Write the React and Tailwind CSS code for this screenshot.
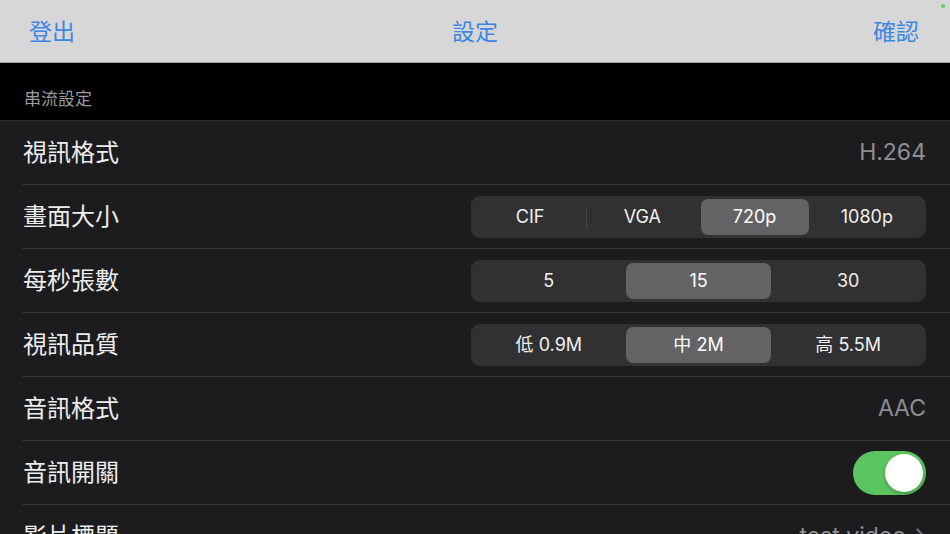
import React from "react";

const font = { fontFamily: "Inter, 'Noto Sans CJK TC', 'Noto Sans CJK SC', sans-serif" };

const Segmented = ({ items, selected }) => (
  <div className="flex h-[42px] w-[455px] items-stretch rounded-[9px] bg-[#313134] p-[3px]">
    {items.map((item, i) => {
      const active = i === selected;
      const showDivider = i > 0 && i !== selected && i - 1 !== selected;
      return (
        <div key={item} className="relative flex flex-1 items-center justify-center">
          {showDivider && <div className="absolute left-0 top-[9px] h-[20px] w-px bg-[#48484b]" />}
          <div
            className={
              active
                ? "mx-[2px] flex h-full w-full items-center justify-center rounded-[7px] bg-[#636366] text-[18px] text-white"
                : "flex h-full w-full items-center justify-center text-[18px] text-[#f0f0f0]"
            }
          >
            {item}
          </div>
        </div>
      );
    })}
  </div>
);

const Row = ({ label, children }) => (
  <div className="pl-[22px]">
    <div className="flex h-[64px] items-center justify-between border-b border-[#353537] pr-[24px]">
      <span className="pl-px text-[24px] text-[#ededed]">{label}</span>
      {children}
    </div>
  </div>
);

const Value = ({ children }) => <span className="text-[23px] text-[#8e8e93]">{children}</span>;

const Toggle = () => (
  <div className="flex h-[44px] w-[73px] items-center justify-end rounded-full bg-[#5cc55f] pr-[3px]">
    <div className="h-[38px] w-[38px] rounded-full bg-white shadow-[0_2px_4px_rgba(0,0,0,0.25)]" />
  </div>
);

export default function App() {
  return (
    <div className="relative h-[534px] w-[950px] overflow-hidden bg-[#1c1c1e]" style={font}>
      <div className="absolute right-[5px] top-[4px] h-[4px] w-[4px] rounded-full bg-[#5fd35f]" />
      <header className="flex h-[63px] items-center justify-between border-b border-[#a3a3a3] bg-[#d7d7d7] px-[29px] pt-[2px]">
        <span className="w-[100px] text-[23px] text-[#3f86e4]">登出</span>
        <span className="text-[23px] text-[#3f86e4]">設定</span>
        <span className="w-[100px] pr-[2px] text-right text-[23px] text-[#3f86e4]">確認</span>
      </header>
      <div className="flex h-[58px] items-end border-b border-[#2c2c2e] bg-black pb-[8px] pl-[24px]">
        <span className="text-[17px] text-[#9a9a9f]">串流設定</span>
      </div>
      <Row label="視訊格式">
        <Value>H.264</Value>
      </Row>
      <Row label="畫面大小">
        <Segmented items={["CIF", "VGA", "720p", "1080p"]} selected={2} />
      </Row>
      <Row label="每秒張數">
        <Segmented items={["5", "15", "30"]} selected={1} />
      </Row>
      <Row label="視訊品質">
        <Segmented items={["低 0.9M", "中 2M", "高 5.5M"]} selected={1} />
      </Row>
      <Row label="音訊格式">
        <Value>AAC</Value>
      </Row>
      <Row label="音訊開關">
        <Toggle />
      </Row>
      <Row label="影片標題">
        <div className="flex items-center gap-[10px]">
          <Value>test video</Value>
          <svg width="10" height="18" viewBox="0 0 10 18" fill="none" stroke="#6e6e73" strokeWidth="2.2" strokeLinecap="round" strokeLinejoin="round">
            <path d="M1.5 1.5l7 7.5-7 7.5" />
          </svg>
        </div>
      </Row>
    </div>
  );
}
